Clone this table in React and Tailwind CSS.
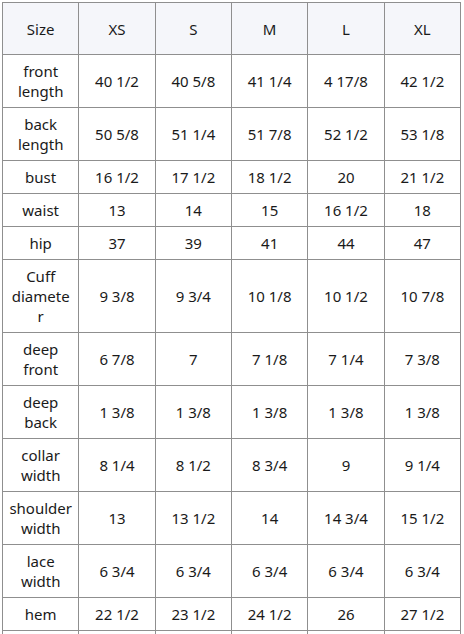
const sizes = ["XS", "S", "M", "L", "XL"];

const rows = [
  ["front length", "40 1/2", "40 5/8", "41 1/4", "4 17/8", "42 1/2"],
  ["back length", "50 5/8", "51 1/4", "51 7/8", "52 1/2", "53 1/8"],
  ["bust", "16 1/2", "17 1/2", "18 1/2", "20", "21 1/2"],
  ["waist", "13", "14", "15", "16 1/2", "18"],
  ["hip", "37", "39", "41", "44", "47"],
  ["Cuff diameter", "9 3/8", "9 3/4", "10 1/8", "10 1/2", "10 7/8"],
  ["deep front", "6 7/8", "7", "7 1/8", "7 1/4", "7 3/8"],
  ["deep back", "1 3/8", "1 3/8", "1 3/8", "1 3/8", "1 3/8"],
  ["collar width", "8 1/4", "8 1/2", "8 3/4", "9", "9 1/4"],
  ["shoulder width", "13", "13 1/2", "14", "14 3/4", "15 1/2"],
  ["lace width", "6 3/4", "6 3/4", "6 3/4", "6 3/4", "6 3/4"],
  ["hem", "22 1/2", "23 1/2", "24 1/2", "26", "27 1/2"],
  ["", "", "", "", "", ""],
];

export default function App() {
  return (
    <div
      className="w-[464px] h-[634px] overflow-hidden bg-white pl-[2px] pt-[2px] text-[#1a1a1a]"
      style={{ fontFamily: '"Noto Sans", "Open Sans", sans-serif' }}
    >
      <table className="w-[459px] table-fixed border-collapse text-[15px] leading-[20px]">
        <thead>
          <tr className="bg-[#f5f6fa]">
            <th className="h-[52px] border border-[#8f8f8f] font-normal text-center">Size</th>
            {sizes.map((s) => (
              <th key={s} className="h-[52px] border border-[#8f8f8f] font-normal text-center">
                {s}
              </th>
            ))}
          </tr>
        </thead>
        <tbody>
          {rows.map((row, i) => (
            <tr key={i}>
              {row.map((cell, j) => (
                <td
                  key={j}
                  className="border border-[#8f8f8f] px-[6px] py-[6px] text-center align-middle [overflow-wrap:anywhere]"
                >
                  {cell}
                </td>
              ))}
            </tr>
          ))}
        </tbody>
      </table>
    </div>
  );
}
